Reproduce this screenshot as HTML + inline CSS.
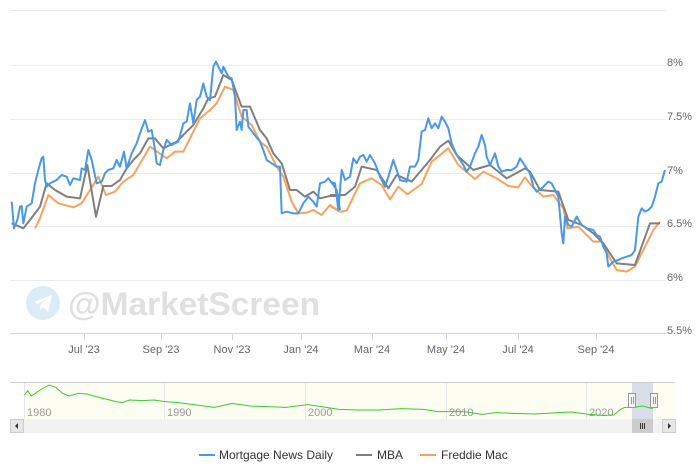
<!DOCTYPE html>
<html><head><meta charset="utf-8"><style>
html,body{margin:0;padding:0;background:#fff;width:700px;height:473px;overflow:hidden}
svg{display:block;font-family:"Liberation Sans",sans-serif}
</style></head><body>
<svg width="700" height="473" viewBox="0 0 700 473">
<g stroke="#ececec" stroke-width="1">
<line x1="10" y1="10.5" x2="666" y2="10.5"/>
<line x1="10" y1="65.5" x2="666" y2="65.5"/>
<line x1="10" y1="119.5" x2="666" y2="119.5"/>
<line x1="10" y1="173.5" x2="666" y2="173.5"/>
<line x1="10" y1="226.5" x2="666" y2="226.5"/>
<line x1="10" y1="280.5" x2="666" y2="280.5"/>
</g>
<line x1="10" y1="333.5" x2="666" y2="333.5" stroke="#ccd6eb"/>
<g stroke="#ccd6eb"><line x1="84.5" y1="333" x2="84.5" y2="340"/><line x1="161.5" y1="333" x2="161.5" y2="340"/><line x1="232.5" y1="333" x2="232.5" y2="340"/><line x1="301.5" y1="333" x2="301.5" y2="340"/><line x1="372.5" y1="333" x2="372.5" y2="340"/><line x1="446.5" y1="333" x2="446.5" y2="340"/><line x1="518.5" y1="333" x2="518.5" y2="340"/><line x1="596.5" y1="333" x2="596.5" y2="340"/></g>
<g font-size="11" fill="#666">
<text x="667" y="66">8%</text><text x="667" y="120">7.5%</text><text x="667" y="174">7%</text><text x="667" y="227">6.5%</text><text x="667" y="281">6%</text><text x="667" y="334">5.5%</text>
</g>
<g font-size="11" fill="#666" text-anchor="middle">
<text x="84" y="353">Jul '23</text><text x="161" y="353">Sep '23</text><text x="232" y="353">Nov '23</text><text x="301" y="353">Jan '24</text><text x="372" y="353">Mar '24</text><text x="446" y="353">May '24</text><text x="518" y="353">Jul '24</text><text x="596" y="353">Sep '24</text>
</g>
<circle cx="43" cy="303" r="17" fill="#dcecf7"/>
<path d="M34 302 L52 295 L48 312 L43 307 L40 310 L40 305 L48 298 L38 304 Z" fill="#fff"/>
<text x="68" y="315" font-size="32" font-weight="bold" fill="#e0e0e0" textLength="252" lengthAdjust="spacingAndGlyphs">@MarketScreen</text>
<g fill="none" stroke-width="2" stroke-linejoin="round">
<g transform="translate(0,50) scale(0.33333)">
<polyline vector-effect="non-scaling-stroke" stroke="#f7a35c" points="105,535 120,505 145,435 175,460 220,472 245,460 295,380 318,435 345,425 370,395 400,375 450,290 500,325 525,305 550,305 600,205 630,180 650,160 675,110 700,120 725,200 755,225 780,275 800,290 830,350 850,380 875,455 895,490 920,488 940,480 965,495 990,465 1020,485"/>
<polyline vector-effect="non-scaling-stroke" stroke="#7f7f7f" points="35,520 70,535 90,510 120,470 140,400 165,420 200,440 240,445 262,345 288,500 310,408 335,408 360,390 380,355 400,330 420,310 445,265 465,265 490,295 530,275 580,225 610,175 625,145 645,140 670,75 695,90 725,170 750,170 780,240 800,265 820,310 845,340 870,420 890,420 915,440 940,425 960,445 990,438 1020,438"/>
<polyline vector-effect="non-scaling-stroke" stroke="#4a98e8" points="35,455 42,535 52,510 60,470 65,468 70,520 80,470 95,460 105,400 115,360 125,325 130,320 135,390 140,410 150,400 160,395 170,390 185,375 200,380 210,405 220,385 240,390 245,355 255,360 265,300 275,330 290,400 305,395 315,370 325,360 340,355 350,330 360,350 372,305 380,355 395,310 410,280 420,250 435,210 445,245 455,240 465,300 470,340 480,345 490,300 500,270 515,285 535,275 550,220 560,215 570,160 580,220 590,150 600,140 610,100 620,140 630,150 640,50 648,35 655,50 665,70 670,50 685,80 695,85 705,140 710,240 720,215 725,240 730,180 740,180 745,230 760,250 780,275 790,300 800,330 815,340 830,350 840,350 845,490 860,485 880,490 895,490 910,460 925,440 940,455 950,470 960,400 975,395 985,385 1000,405 1010,420 1020,480"/>
</g>
<g transform="translate(330,100) scale(0.33333)">
<polyline vector-effect="non-scaling-stroke" stroke="#f7a35c" points="0,318 30,335 50,332 90,250 125,235 155,255 180,298 205,260 232,283 275,252 305,185 355,145 385,195 435,237 460,215 500,235 535,258 565,262 585,232 605,258 640,290 670,285 700,325 712,385 745,380 790,425 815,425 840,475 860,510 890,515 915,500 945,440 970,390 990,365"/>
<polyline vector-effect="non-scaling-stroke" stroke="#7f7f7f" points="0,285 45,285 75,260 95,200 140,210 175,265 200,225 245,245 300,180 330,140 355,122 380,165 430,210 480,195 530,235 585,205 600,215 630,270 685,275 715,360 755,375 790,400 820,430 860,490 915,495 960,370 990,370"/>
<polyline vector-effect="non-scaling-stroke" stroke="#4a98e8" points="0,245 15,250 25,330 35,210 45,240 60,230 70,175 80,190 90,170 100,165 110,185 120,165 135,190 150,230 165,260 175,230 190,180 200,210 210,240 230,245 240,200 255,200 265,180 275,95 285,90 295,55 305,85 315,70 325,85 335,50 345,65 355,85 365,130 380,165 400,195 410,215 420,200 435,160 445,140 455,105 465,135 470,170 480,195 495,160 505,200 515,215 530,210 545,210 560,200 570,175 580,190 590,205 600,220 610,260 620,275 635,265 645,255 655,245 665,250 675,270 685,290 695,400 700,430 705,350 715,375 725,380 740,350 755,375 770,385 790,390 800,405 810,410 820,440 830,460 835,500 850,485 865,480 875,475 890,470 905,465 915,450 925,350 935,325 945,335 955,330 965,320 975,290 985,250 995,245 1005,210"/>
</g>
</g>
<rect x="24" y="383" width="651" height="36" fill="#fdfdf1"/>
<line x1="10" y1="382.5" x2="675" y2="382.5" stroke="#ccc"/>
<g stroke="#e6e6e6"><line x1="24.5" y1="383" x2="24.5" y2="419"/><line x1="164.5" y1="383" x2="164.5" y2="419"/><line x1="305.5" y1="383" x2="305.5" y2="419"/><line x1="446.5" y1="383" x2="446.5" y2="419"/><line x1="586.5" y1="383" x2="586.5" y2="419"/></g>
<g font-size="11" fill="#999"><text x="27" y="416">1980</text><text x="167" y="416">1990</text><text x="308" y="416">2000</text><text x="449" y="416">2010</text><text x="589" y="416">2020</text></g>
<rect x="632" y="383" width="21" height="36" fill="rgba(102,133,194,0.25)"/>
<polyline transform="translate(0,370) scale(0.4464,0.33333)" vector-effect="non-scaling-stroke" fill="none" stroke="#3cc83c" stroke-width="1" points="55,75 62,62 70,78 90,60 110,45 125,52 140,70 155,78 175,70 195,72 215,80 240,88 260,95 275,98 290,90 320,92 345,90 370,95 400,98 440,105 480,112 520,100 560,108 600,110 640,112 690,104 720,110 760,118 800,120 850,120 900,116 950,118 980,125 1000,125 1040,125 1080,133 1110,128 1150,130 1200,132 1250,128 1280,126 1320,133 1350,136 1375,135 1390,118 1400,112 1420,112 1440,108 1462,116"/>
<g fill="#f2f2f2" stroke="#999" stroke-width="1"><rect x="628.5" y="393.5" width="7" height="14"/><rect x="650.5" y="393.5" width="7" height="14"/></g>
<g stroke="#999"><line x1="631.5" y1="397" x2="631.5" y2="404"/><line x1="633.5" y1="397" x2="633.5" y2="404"/><line x1="653.5" y1="397" x2="653.5" y2="404"/><line x1="655.5" y1="397" x2="655.5" y2="404"/></g>
<rect x="10" y="419" width="665" height="14" fill="#f2f2f2"/>
<rect x="10.5" y="419.5" width="13" height="13" fill="#e6e6e6" stroke="#ccc"/>
<rect x="662.5" y="419.5" width="13" height="13" fill="#e6e6e6" stroke="#ccc"/>
<path d="M18 423 L15 426 L18 429Z" fill="#333"/><path d="M668 423 L671 426 L668 429Z" fill="#333"/>
<rect x="632" y="419" width="21" height="14" fill="#ccc"/>
<g stroke="#333"><line x1="640.5" y1="423" x2="640.5" y2="429"/><line x1="642.5" y1="423" x2="642.5" y2="429"/><line x1="644.5" y1="423" x2="644.5" y2="429"/></g>
<g stroke-width="2"><line x1="199" y1="455" x2="215" y2="455" stroke="#4a98e8"/><line x1="356" y1="455" x2="372" y2="455" stroke="#7f7f7f"/><line x1="420" y1="455" x2="436" y2="455" stroke="#f7a35c"/></g>
<g font-size="12" fill="#333"><text x="219" y="459">Mortgage News Daily</text><text x="377" y="459">MBA</text><text x="441" y="459">Freddie Mac</text></g>
</svg>
</body></html>
